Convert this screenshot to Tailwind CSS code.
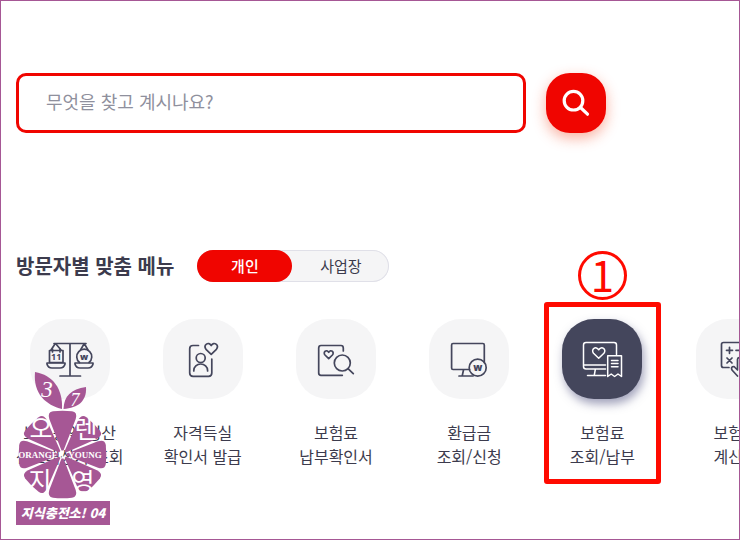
<!DOCTYPE html>
<html lang="ko">

<head>
    <meta charset="UTF-8">
    <meta name="viewport" content="width=device-width, initial-scale=1.0">
    <title>방문자별 맞춤 메뉴</title>
    <script src="https://cdn.jsdelivr.net/npm/@tailwindcss/browser@4"></script>
</head>

<body class="relative min-h-screen overflow-x-hidden border border-[#a65795] bg-white pt-[72px] font-['Noto_Sans_CJK_KR','Noto_Sans',sans-serif] text-[#3c3b4d]">

    <!-- Search -->
    <form class="flex gap-5 px-[15px]" role="search">
        <input type="search" aria-label="검색어" placeholder="무엇을 찾고 계시나요?" class="h-[60px] w-full max-w-[510px] rounded-[10px] border-3 border-[#f00500] px-[27px] pb-1 text-[18px] outline-none placeholder:text-[#8f909d]">
        <button type="submit" aria-label="검색" class="size-[60px] shrink-0 rounded-[24px] bg-[#f00500] shadow-[0_5px_14px_rgba(240,60,20,0.4)]">
            <svg viewBox="0 0 60 60" class="size-full" fill="none" stroke="#fff" stroke-width="3.2" stroke-linecap="round">
                <circle cx="27.5" cy="27.7" r="9.3" />
                <path d="M34.5 34.5L41.5 41.2" />
            </svg>
        </button>
    </form>

    <!-- Menu heading and tabs -->
    <div class="mt-[117px] flex items-center gap-[23px] px-[15px]">
        <h2 class="text-[20px] leading-8 font-bold">방문자별 맞춤 메뉴</h2>
        <div class="flex h-8 w-48 rounded-full bg-[#f5f5f6] text-[15px] inset-ring inset-ring-[#e0e0e8]">
            <button type="button" class="w-[95px] rounded-full bg-[#f00500] font-medium text-white">개인</button>
            <button type="button" class="flex-1">사업장</button>
        </div>
    </div>

    <!-- Quick menu -->
    <ul class="mt-[37px] flex overflow-x-clip pl-[2px] text-center text-[16px] leading-6 *:w-[18.1%] *:shrink-0">
        <li>
            <a href="#" class="flex flex-col items-center gap-[21px]">
                <span class="size-20 rounded-[32px] bg-[#f5f5f6]">
                    <svg viewBox="0 0 80 80" fill="none" stroke="#44465c" stroke-width="1.7" stroke-linecap="round" stroke-linejoin="round">
                        <path d="M24 24.5H56M40 24.5V57M30 57H50.5" />
                        <path d="M25 25L21 31M26 25L31 31M54 25L50.5 31M54.5 25L58 31" />
                        <path d="M19.5 31.5H33V43.5H19.5ZM22.5 30V33M30 30V33" />
                        <path d="M17 44H35V45Q34 49 30 49H22Q18 49 17 45ZM45 44H63V45Q62 49 58 49H50Q46 49 45 45Z" />
                        <path d="M49.5 43.5A7.5 7.5 0 1 1 59 43.5" />
                        <text x="26.2" y="41" text-anchor="middle" font-family="Open Sans" font-size="9" font-weight="700" fill="#44465c" stroke="none">11</text>
                        <text x="54.2" y="41" text-anchor="middle" font-family="Open Sans" font-size="9" font-weight="800" fill="#44465c" stroke="none">w</text>
                    </svg>
                </span>
                <span>보수총액 정산<br>신고대상자 조회</span>
            </a>
        </li>
        <li>
            <a href="#" class="flex flex-col items-center gap-[21px]">
                <span class="size-20 rounded-[32px] bg-[#f5f5f6]">
                    <svg viewBox="0 0 80 80" fill="none" stroke="#44465c" stroke-width="1.7" stroke-linecap="round" stroke-linejoin="round">
                        <path d="M35.5 26.5H30Q26.7 26.5 26.7 29.7V54Q26.7 57.3 30 57.3H45.6Q48.8 57.3 48.8 54V40" />
                        <circle cx="37.7" cy="39" r="4.5" />
                        <path d="M30.8 52V51.5A6.9 6.5 0 0 1 44.6 51.5V52" />
                        <path d="M48.2 35.3L43 30.3C40 26 45.5 22 48.2 26.5C51 22 56.5 26 53.4 30.3Z" />
                    </svg>
                </span>
                <span>자격득실<br>확인서 발급</span>
            </a>
        </li>
        <li>
            <a href="#" class="flex flex-col items-center gap-[21px]">
                <span class="size-20 rounded-[32px] bg-[#f5f5f6]">
                    <svg viewBox="0 0 80 80" fill="none" stroke="#44465c" stroke-width="1.7" stroke-linecap="round" stroke-linejoin="round">
                        <path d="M47.3 32V29Q47.3 26.5 45 26.5H25Q22.7 26.5 22.7 29V54Q22.7 56.3 25 56.3H46.3" />
                        <path d="M32.7 39.7L29 36C26.5 33 30.7 29.8 32.7 33.3C34.7 29.8 38.9 33 36.4 36Z" />
                        <circle cx="46.3" cy="44" r="8" />
                        <path d="M52 49.7L57.3 54.7" />
                    </svg>
                </span>
                <span>보험료<br>납부확인서</span>
            </a>
        </li>
        <li>
            <a href="#" class="flex flex-col items-center gap-[21px]">
                <span class="size-20 rounded-[32px] bg-[#f5f5f6]">
                    <svg viewBox="0 0 80 80" fill="none" stroke="#44465c" stroke-width="1.7" stroke-linecap="round" stroke-linejoin="round">
                        <path d="M40.5 50.5H24Q22.6 50.5 22.6 49V26Q22.6 24.5 24 24.5H53.8Q55.3 24.5 55.3 26V43.5M34.5 51L33.3 56.5M30 57H44" />
                        <circle cx="48.7" cy="48.7" r="8.5" />
                        <text x="48.7" y="52" text-anchor="middle" font-family="Open Sans" font-size="10" font-weight="800" fill="#44465c" stroke="none">w</text>
                    </svg>
                </span>
                <span>환급금<br>조회/신청</span>
            </a>
        </li>
        <li class="relative">
            <a href="#" class="flex flex-col items-center gap-[21px]">
                <span class="size-20 rounded-[32px] bg-[#44465c] shadow-[2px_5px_10px_rgba(68,70,120,0.5)]">
                    <svg viewBox="0 0 80 80" fill="none" stroke="#fff" stroke-width="1.5" stroke-linecap="round" stroke-linejoin="round">
                        <path d="M54.5 35.5V26Q54.5 23.5 52 23.5H24Q21.5 23.5 21.5 26V47.5Q21.5 50 24 50H43.5M21.5 46H43.5M33.3 50.5L32.3 56M25.5 56.5H43.5" />
                        <path d="M36.7 39.3L31.5 34.3C28.5 30 34 26.5 36.7 30.8C39.4 26.5 45 30 41.9 34.3Z" />
                        <path d="M45.7 36.7H59.5V57.5L56 55L52.6 57.5L49.2 55L45.7 57.5Z" />
                        <path d="M49.5 41.5H56M49.5 44.6H56M49.5 47.7H56" />
                    </svg>
                </span>
                <span>보험료<br>조회/납부</span>
            </a>
            <!-- Step marker over the highlighted item -->
            <span class="pointer-events-none absolute inset-x-[8px] -top-[17px] -bottom-4 rounded-[3px] border-5 border-[#ff0a00]"></span>
            <span class="pointer-events-none absolute inset-x-0 -top-[68px] mx-auto flex size-[49px] items-center justify-center rounded-full border-3 border-[#ff0a00] pb-1 text-[42px] leading-[42px] text-[#ff0a00]">1</span>
        </li>
        <li>
            <a href="#" class="flex flex-col items-center gap-[21px]">
                <span class="size-20 rounded-[32px] bg-[#f5f5f6]">
                    <svg viewBox="0 0 80 80" fill="none" stroke="#44465c" stroke-width="1.7" stroke-linecap="round" stroke-linejoin="round">
                        <path d="M33 48.5H27.5Q25.5 48.5 25.5 46.5V25.5Q25.5 23.5 27.5 23.5H53Q55 23.5 55 25.5V38" />
                        <path d="M30.5 31.3H36.5M33.5 28.3V34.3M31 39L36 44M36 39L31 44M40 31.3H47" />
                        <path d="M41.5 57L36 51Q34.5 47.5 38 47.5L41.5 51V40.5Q41.5 38.5 43.5 38.5T45.5 41V48H51Q54 48 54 51V57" />
                    </svg>
                </span>
                <span>보험료<br>계산기</span>
            </a>
        </li>
    </ul>

    <!-- Blog stamp -->
    <div class="pointer-events-none absolute top-[369px] left-[15px] w-[94px]">
        <svg viewBox="16 370 94 131" class="block w-full" fill="#a65795">
            <path d="M35 372C53 375 63 389 62 409C46 405 33 394 35 372Z" />
            <path d="M86 387C71 389 64 396 63.5 409C78 408 87 401 86 387Z" />
            <defs>
                <path id="petal" d="M-1 -4L-13.2 -35.5Q-15.3 -42.5 -9.5 -43.3Q0 -44.3 9.5 -43.3Q15.3 -42.5 13.2 -35.5L1 -4Z" />
            </defs>
            <g transform="translate(62.5 454.5)">
                <use href="#petal" />
                <use href="#petal" transform="rotate(45)" />
                <use href="#petal" transform="rotate(90)" />
                <use href="#petal" transform="rotate(135)" />
                <use href="#petal" transform="rotate(180)" />
                <use href="#petal" transform="rotate(225)" />
                <use href="#petal" transform="rotate(270)" />
                <use href="#petal" transform="rotate(315)" />
            </g>
            <g fill="#fff" text-anchor="middle">
                <g font-family="Liberation Serif" font-style="italic">
                    <text x="47" y="397" font-size="23">3</text>
                    <text x="75" y="406" font-size="18">7</text>
                </g>
                <g font-family="Noto Sans CJK KR" font-size="25">
                    <text x="41" y="438">오</text>
                    <text x="86" y="438">렌</text>
                    <text x="40" y="490">지</text>
                    <text x="83" y="491">영</text>
                </g>
                <g font-family="Liberation Serif" font-size="9" font-weight="700">
                    <text x="38" y="458">ORANGE</text>
                    <text x="62.5" y="458">I</text>
                    <text x="85" y="458">YOUNG</text>
                </g>
            </g>
        </svg>
        <p class="bg-[#a65795] text-center text-[13px] leading-6 font-black text-white italic">지식충전소! 04</p>
    </div>
</body>

</html>
